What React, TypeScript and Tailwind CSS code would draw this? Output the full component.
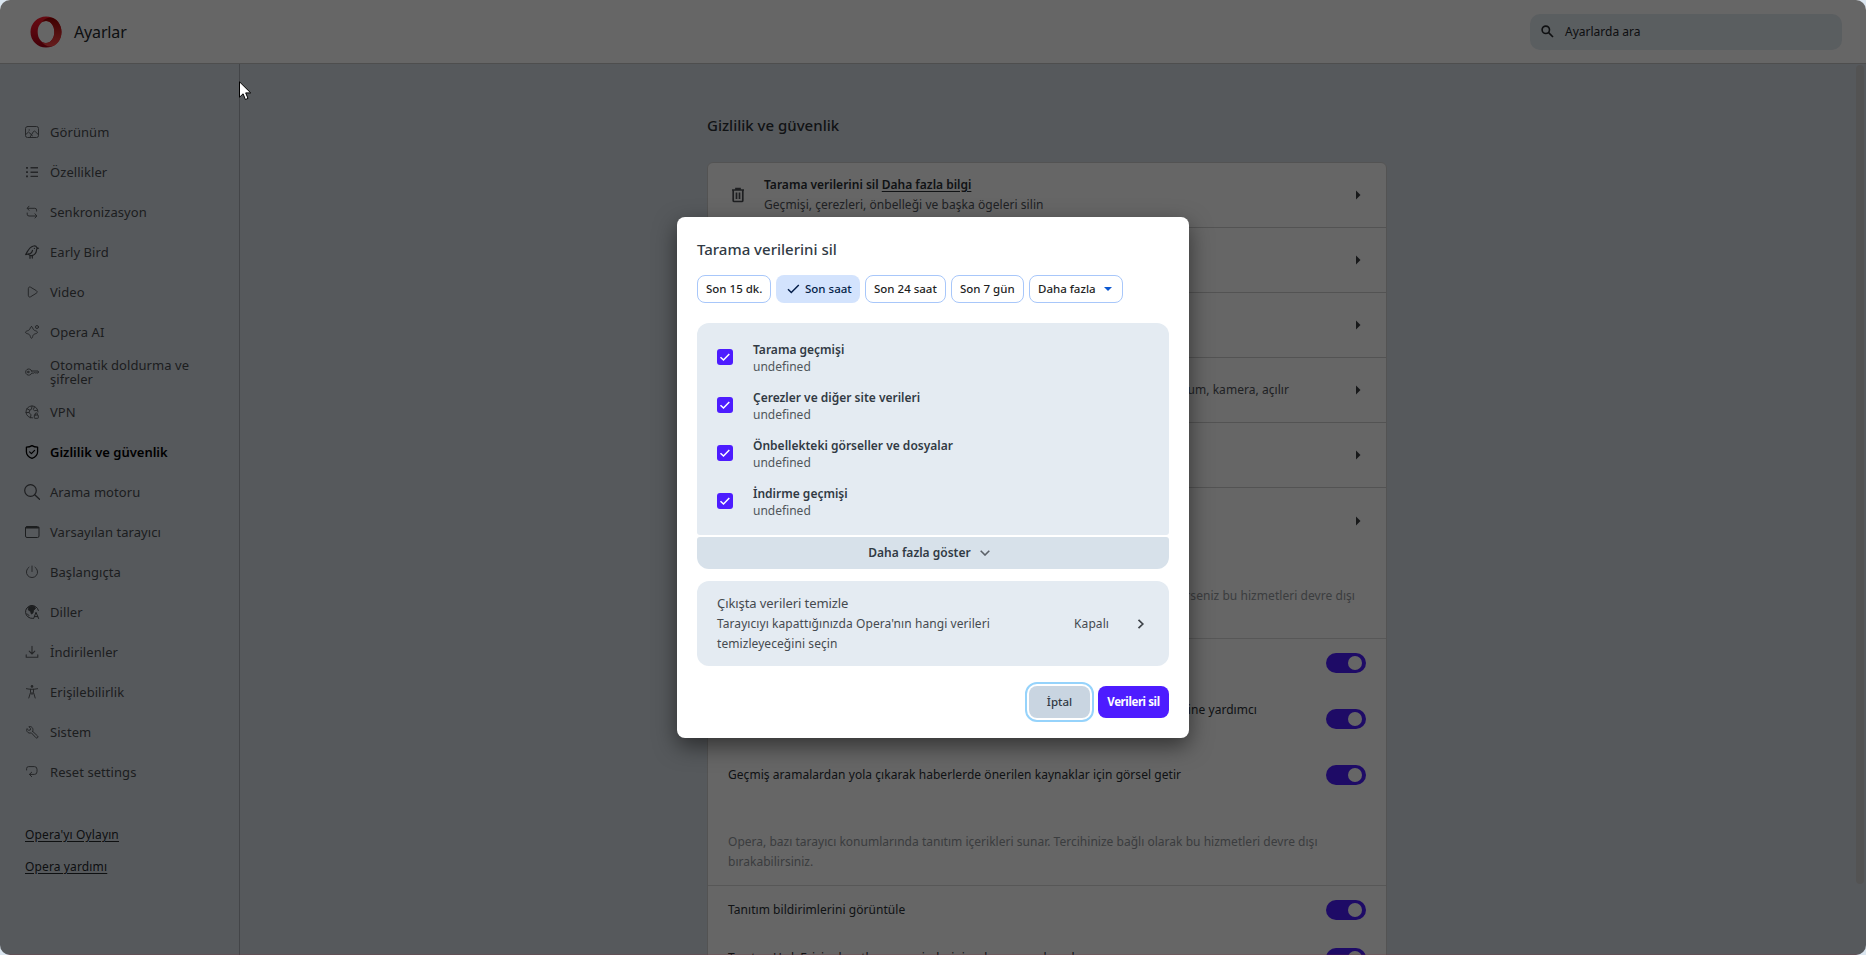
import type { ReactNode } from "react";

type IconProps = { children: ReactNode; size?: number; className?: string };

function Icon({ children, size = 16, className = "" }: IconProps) {
  return (
    <svg
      width={size}
      height={size}
      viewBox="0 0 16 16"
      fill="none"
      stroke="currentColor"
      strokeWidth="1"
      strokeLinecap="round"
      strokeLinejoin="round"
      className={`shrink-0 ${className}`}
    >
      {children}
    </svg>
  );
}

type NavItem = { label: string; icon: ReactNode; active?: boolean; dark?: boolean };

const navItems: NavItem[] = [
  {
    label: "Görünüm",
    icon: (
      <>
        <rect x="1.5" y="2.5" width="13" height="11" rx="2" />
        <circle cx="5.2" cy="6" r=".7" fill="currentColor" stroke="none" />
        <path d="M1.8 10.5 4.5 8l2.4 2.2M6 13.2 9.2 8c.6-1 1.2-1.3 2-.5l3 3M6.9 10.2l1.6 1.6" />
      </>
    ),
  },
  {
    label: "Özellikler",
    icon: (
      <>
        <path d="M6.5 3.8h7.5M6.5 8.2h7.5M6.5 12.4h7.5" strokeWidth="1.4" strokeLinecap="butt" />
        <path d="M2 3.8h2M2 8.2h2M2 12.4h2" strokeWidth="1.8" strokeLinecap="butt" />
      </>
    ),
  },
  {
    label: "Senkronizasyon",
    icon: <path d="M5 2.2 3.2 4.3 5 6.3M3.4 4.3h7.4a1.8 1.8 0 0 1 1.8 1.8v1M11 14l1.8-2L11 9.8M12.6 12H5a1.8 1.8 0 0 1-1.8-1.8V9" />,
  },
  {
    label: "Early Bird",
    dark: true,
    icon: (
      <>
        <path
          d="M14.5 4.2 12.8 3.6C12.3 2.2 10.8 1.6 9.5 2 7 2.7 4.8 5 3.2 7.9L1.7 10.6l2.6-.6c1 1.5 2.6 2.1 4.4 1.4 2.2-.9 3.6-2.7 3.8-5.2l.3-1.4z"
          strokeWidth="1.2"
        />
        <path d="M4.3 10c1.8 0 3.8-1.6 4.2-3.6M6 12v2.3M8.3 11.8v2.3M10.4 4.3v.1" strokeWidth="1.2" />
      </>
    ),
  },
  {
    label: "Video",
    icon: <path d="M4.3 4.4c0-1.1 1.1-1.8 2.1-1.3l6 3.6c1 .6 1 1.9 0 2.5l-6 3.7c-1 .5-2.1-.1-2.1-1.3z" />,
  },
  {
    label: "Opera AI",
    icon: (
      <>
        <path d="M7.5 2.6c.7 0 1 .6 1.2 1.3.4 1.6 1 2.2 2.6 2.8.9.3 2.2.8 2.2 1.6s-1.3 1.2-2.2 1.5c-1.6.5-2.2 1-2.6 2.6-.2.9-.6 1.9-1.2 1.9s-1-1-1.2-1.9c-.4-1.6-1-2.1-2.6-2.6-.9-.3-2.2-.7-2.2-1.5s1.3-1.3 2.2-1.6c1.6-.6 2.2-1.2 2.6-2.8.2-.7.5-1.3 1.2-1.3z" />
        <circle cx="13" cy="3" r="1.5" />
      </>
    ),
  },
  {
    label: "Otomatik doldurma ve şifreler",
    icon: (
      <>
        <path d="M7.7 7H14l.6 1-.6 1h-1.2l-.7-.5-.8.5-.8-.4-.7.5H7.7a3.100 3.100 0 1 1 0-2.100z" />
        <circle cx="4.2" cy="8" r=".8" />
      </>
    ),
  },
  {
    label: "VPN",
    icon: (
      <>
        <path d="M8.5 13.900A6 6 0 1 1 14 8M3 4.800l2.800 1.400 1.700-1L8 2.100M5.800 6.200 5 8.500l2 2.300-.6 3M10.400 3l-1 2.600 1 1.200 3-.6M2 8.500h3" />
        <rect x="10.3" y="11" width="4" height="3.3" rx=".5" />
        <path d="M11.2 11v-1a1.100 1.100 0 0 1 2.200 0v1" />
      </>
    ),
  },
  {
    label: "Gizlilik ve güvenlik",
    active: true,
    icon: (
      <>
        <path d="M8 1.600c1.600 1.100 3.500 1.500 5.600 1.500v4.700c0 3.200-2.200 5.300-5.600 6.600-3.400-1.300-5.600-3.400-5.600-6.600V3.100c2.100 0 4-.4 5.600-1.500z" strokeWidth="1.3" />
        <path d="m5.600 7.900 1.800 1.700 3.200-3.200" strokeWidth="1.2" />
      </>
    ),
  },
  {
    label: "Arama motoru",
    dark: true,
    icon: (
      <>
        <circle cx="6.5" cy="6.5" r="5.8" strokeWidth="1.2" />
        <path d="m10.700 10.700 4.800 4.600" strokeWidth="1.3" />
      </>
    ),
  },
  {
    label: "Varsayılan tarayıcı",
    dark: true,
    icon: (
      <>
        <rect x="1.5" y="2.5" width="13.5" height="11" rx="1.5" />
        <path d="M2 3.700h12.500" strokeWidth="1.6" />
      </>
    ),
  },
  {
    label: "Başlangıçta",
    icon: <path d="M8 2v5.500M5 3.200a5.600 5.600 0 1 0 6 0" />,
  },
  {
    label: "Diller",
    dark: true,
    icon: (
      <>
        <path d="M8.500 14.400A6.500 6.500 0 1 1 14.400 6.500" />
        <path d="M4.500 3.200 7 2l3.500.5 1 2-2 1.700-.6 2.800-1.500 1-.8-2.700-1.800-1z" fill="currentColor" />
        <path d="m3.200 9.800 1.800 1.800M9.600 14.500 12 8.300l2.600 6.200M10.400 12.600h3.300" />
      </>
    ),
  },
  {
    label: "İndirilenler",
    icon: <path d="M8 2.300v7.500M5.200 7.200 8 10l2.800-2.800M2.200 10.800v2.400h11.600v-2.400" strokeWidth="1.1" />,
  },
  {
    label: "Erişilebilirlik",
    icon: (
      <>
        <circle cx="8" cy="2.4" r="1.3" fill="currentColor" stroke="none" />
        <path d="M2.400 4.700c3.700.8 7.500.8 11.200 0M6.500 5.300v3.200l-1.700 5.500M9.500 5.300v3.200l1.700 5.500M6.700 9h2.600M8 9.300v1.200" />
      </>
    ),
  },
  {
    label: "Sistem",
    icon: <path d="M8.700 7.400 13.600 12a1.200 1.200 0 0 1-1.700 1.700L7.300 8.800c-1.500.6-3.200.3-4-1-.7-.9-.9-2.200-.4-3.200l1.800 1.700 1.600-.3.300-1.600L4.800 2.700c2.500-.9 5.200 1.500 3.900 4.700z" />,
  },
  {
    label: "Reset settings",
    icon: <path d="M2.600 6V4.600a2 2 0 0 1 2-2h5.800a2.600 2.600 0 0 1 2.600 2.600v2.600a2.600 2.600 0 0 1-2.600 2.600H5.500M7.700 8.200l-2.300 2.200 2.300 2.300" />,
  },
];

function OperaLogo() {
  return (
    <svg width="32" height="32" viewBox="0 0 32 32" className="shrink-0">
      <defs>
        <linearGradient id="ring" x1="0" y1="0" x2="0" y2="1">
          <stop offset="0" stopColor="#ff1b2d" />
          <stop offset=".35" stopColor="#e8152a" />
          <stop offset="1" stopColor="#a70014" />
        </linearGradient>
        <linearGradient id="side" x1="0" y1="0" x2="0" y2="1">
          <stop offset="0" stopColor="#9c0000" />
          <stop offset="1" stopColor="#ff4b4b" />
        </linearGradient>
      </defs>
      <path
        fillRule="evenodd"
        fill="url(#ring)"
        d="M16 .5a15.500 15.500 0 1 0 0 31 15.500 15.500 0 0 0 0-31zm0 4.500c4.700 0 8.300 4.700 8.300 11s-3.600 11-8.300 11-8.300-4.700-8.300-11 3.600-11 8.300-11z"
      />
      <path
        fill="url(#side)"
        d="M10.800 7.300C12 5.800 14 5 16 5c4.700 0 8.300 4.700 8.300 11s-3.600 11-8.300 11c-2 0-4-.8-5.200-2.300 2.400 3.600 6 5.900 9.500 5.900 6 0 11.200-6.500 11.200-14.600S26.300 1.400 20.300 1.400c-3.500 0-7.100 2.300-9.500 5.900z"
      />
    </svg>
  );
}

function Toggle() {
  return (
    <span className="flex h-5 w-10 shrink-0 items-center justify-end rounded-full bg-[#4d1cff] pr-1">
      <span className="size-3.5 rounded-full bg-white" />
    </span>
  );
}

function RowArrow() {
  return (
    <svg width="5" height="10" viewBox="0 0 5 10" className="text-[#3c3f43]">
      <path d="M0 .5 4.500 5 0 9.500z" fill="currentColor" />
    </svg>
  );
}

function LinkRow({ children }: { children?: ReactNode }) {
  return (
    <div className="flex h-[65px] items-center border-b border-[#cfcfcf] pr-[25px] pl-5">
      <div className="flex flex-1 items-center">{children}</div>
      <RowArrow />
    </div>
  );
}

function Sidebar() {
  return (
    <aside className="w-[240px] shrink-0 border-r border-[#a9adb3] pt-12">
      <nav>
        {navItems.map((item) => (
          <a
            key={item.label}
            className={`flex h-10 items-center gap-[10px] pr-8 pl-6 text-[13px] leading-[14px] ${
              item.active ? "font-semibold text-black" : "tracking-[0.06px] text-[#484b4f]"
            }`}
          >
            <Icon className={item.active ? "text-black" : item.dark ? "text-[#484b4f]" : "text-[#5c6064]"}>{item.icon}</Icon>
            <span>{item.label}</span>
          </a>
        ))}
      </nav>
      <div className="mt-[27px] flex flex-col items-start pl-[25px] text-[12px] leading-8 tracking-[0.13px] text-[#25282c] underline underline-offset-2">
        <a>Opera'yı Oylayın</a>
        <a>Opera yardımı</a>
      </div>
    </aside>
  );
}

function SettingsCard() {
  return (
    <div className="mt-[25px] h-[900px] rounded-md border border-[#d0d0d0] bg-white text-[12px] tracking-[0.05px] text-[#2b3035]">
      <LinkRow>
        <svg width="20" height="20" viewBox="0 0 20 20" fill="none" stroke="#4b4f54" strokeWidth="1.7">
          <path d="M4 5h12M8 4.600V3.500h4v1.100M5.200 5v10.500c0 .7.400 1 1 1h7.600c.6 0 1-.3 1-1V5M8.500 7.500v6.500M11.500 7.500v6.500" />
        </svg>
        <div className="ml-4 leading-5 whitespace-nowrap">
          <div className="font-semibold tracking-normal">
            Tarama verilerini sil <a className="underline underline-offset-2">Daha fazla bilgi</a>
          </div>
          <div className="text-[#50545a]">Geçmişi, çerezleri, önbelleği ve başka ögeleri silin</div>
        </div>
      </LinkRow>
      <LinkRow />
      <LinkRow />
      <LinkRow>
        <div className="w-[561px] text-right whitespace-nowrap text-[#50545a]">bilgileri kullanabileceğini kontrol eder (konum, kamera, açılır</div>
      </LinkRow>
      <LinkRow />
      <div className="h-[151px] border-b border-[#d9d9d9]">
        <div className="flex h-[65px] items-center justify-end pr-[25px]">
          <RowArrow />
        </div>
        <p className="pt-[33px] pr-[31px] text-right leading-5 text-[#94989d]">İsterseniz bu hizmetleri devre dışı</p>
      </div>
      <div className="flex h-12 items-center justify-end px-5">
        <Toggle />
      </div>
      <div className="flex h-16 items-center justify-end px-5">
        <span className="mr-[69px] pb-[19px] leading-5">gelişmesine yardımcı</span>
        <Toggle />
      </div>
      <div className="flex h-12 items-center justify-between px-5">
        <span>Geçmiş aramalardan yola çıkarak haberlerde önerilen kaynaklar için görsel getir</span>
        <Toggle />
      </div>
      <div className="h-[87px] border-b border-[#d9d9d9] px-5 pt-[33px]">
        <p className="w-[620px] leading-5 tracking-[0.02px] text-[#94989d]">
          Opera, bazı tarayıcı konumlarında tanıtım içerikleri sunar. Tercihinize bağlı olarak bu hizmetleri devre dışı bırakabilirsiniz.
        </p>
      </div>
      <div className="flex h-12 items-center justify-between px-5">
        <span>Tanıtım bildirimlerini görüntüle</span>
        <Toggle />
      </div>
      <div className="flex h-12 items-center justify-between px-5">
        <span>Tanıtım Hızlı Erişim kayıtlarını, yer imlerini ve kampanyaları al</span>
        <Toggle />
      </div>
    </div>
  );
}

const dataTypes = ["Tarama geçmişi", "Çerezler ve diğer site verileri", "Önbellekteki görseller ve dosyalar", "İndirme geçmişi"];

const chipBase = "flex h-7 items-center rounded-lg text-[11.5px] font-medium whitespace-nowrap";
const chipOutline = `${chipBase} border border-[#a8c7fa] pl-2 text-[#1f1f1f]`;

function ClearDataDialog() {
  return (
    <div
      role="dialog"
      className="flex h-[521px] w-[512px] flex-col rounded-lg bg-white px-5 shadow-[0_8px_22px_rgba(0,0,0,0.5)]"
    >
      <h2 className="mt-5 text-[15px] leading-6 font-medium text-[#313a44]">Tarama verilerini sil</h2>

      <div className="mt-[14px] flex gap-[5px]">
        <span className={`${chipOutline} w-[74px]`}>Son 15 dk.</span>
        <span className={`${chipBase} w-[84px] gap-[5px] bg-[#d3e3fd] pl-[11px] text-[#041e49]`}>
          <svg width="13" height="10" viewBox="0 0 13 10" fill="none" stroke="currentColor" strokeWidth="1.5">
            <path d="m1 5.300 3.300 3.200L11.800 1" />
          </svg>
          Son saat
        </span>
        <span className={`${chipOutline} w-[81px]`}>Son 24 saat</span>
        <span className={`${chipOutline} w-[73px]`}>Son 7 gün</span>
        <span className={`${chipOutline} w-[94px] gap-2`}>
          Daha fazla
          <svg width="8" height="4" viewBox="0 0 8 4">
            <path d="M0 0h8L4 4z" fill="#0b57d0" />
          </svg>
        </span>
      </div>

      <div className="mt-5 flex h-[212px] flex-col rounded-t-xl rounded-b-[3px] bg-[#e4ebf2] pt-[10px] pl-5">
        {dataTypes.map((label) => (
          <label key={label} className="flex h-12 items-center gap-5">
            <span className="flex size-4 items-center justify-center rounded-[3px] bg-[#4d1cff]">
              <svg width="12" height="12" viewBox="0 0 12 12" fill="none" stroke="#fff" strokeWidth="1.5">
                <path d="m1.500 6.200 3 2.800L10.300 3" />
              </svg>
            </span>
            <span className="pt-[2px] text-[12px] leading-[17px]">
              <span className="block font-semibold text-[#313a44]">{label}</span>
              <span className="block text-[#50565b]">undefined</span>
            </span>
          </label>
        ))}
      </div>

      <button className="mt-[2px] flex h-8 items-center justify-center gap-[9px] rounded-t-[3px] rounded-b-xl bg-[#d7e1ea] pr-[8px] text-[12px] font-semibold text-[#313a44]">
        Daha fazla göster
        <svg width="10" height="6" viewBox="0 0 10 6" fill="none" stroke="#5b6168" strokeWidth="1.6">
          <path d="m.7.700 4.300 4.300L9.300.7" />
        </svg>
      </button>

      <div className="mt-3 flex h-[85px] items-center rounded-xl bg-[#e4ebf2] pt-[2px] pr-6 pl-5 text-[12px] leading-[20.6px] tracking-[0.07px] text-[#454a4f]">
        <div className="w-[300px]">
          <div className="text-[13px] tracking-[-0.08px]">Çıkışta verileri temizle</div>
          <div>Tarayıcıyı kapattığınızda Opera'nın hangi verileri temizleyeceğini seçin</div>
        </div>
        <span className="ml-auto">Kapalı</span>
        <svg width="8" height="10" viewBox="0 0 8 10" fill="none" stroke="#3f444a" strokeWidth="1.7" className="ml-[28px]">
          <path d="M1.500.8 5.800 5 1.500 9.200" />
        </svg>
      </div>

      <div className="mt-5 flex justify-end gap-2 text-[11.5px]">
        <button className="h-8 w-[61px] rounded-lg bg-[#c9d5e1] font-medium text-[#313a44] outline-2 outline-offset-2 outline-[#96d3fb]">
          İptal
        </button>
        <button className="h-8 w-[71px] rounded-lg bg-[#4d1cff] font-bold tracking-[-0.4px] text-white">Verileri sil</button>
      </div>
    </div>
  );
}

export default function App() {
  return (
    <div className="h-[955px] w-[1866px] overflow-hidden bg-[#dbe6f0] font-['Noto_Sans',sans-serif]">
      <div className="relative flex h-full flex-col overflow-hidden rounded-[10px] bg-[#d8dfe7]">
        <header className="flex h-16 shrink-0 items-center border-b border-[#c4c4c4] bg-white pr-6 pl-[30px]">
          <OperaLogo />
          <h1 className="ml-3 pt-px text-[16px] tracking-[-0.15px] text-[#25282c]">Ayarlar</h1>
          <div className="ml-auto flex h-9 w-[312px] items-center gap-[11px] rounded-[10px] bg-[#e2eaf0] pl-[11px] text-[12px] text-[#25282c]">
            <svg width="13" height="13" viewBox="0 0 13 13" fill="none" stroke="currentColor" strokeWidth="1.6">
              <circle cx="4.8" cy="4.8" r="3.7" />
              <path d="m7.600 7.600 4.400 4.400" />
            </svg>
            Ayarlarda ara
          </div>
        </header>

        <div className="flex min-h-0 flex-1">
          <Sidebar />
          <main className="flex flex-1 justify-center overflow-hidden pr-[2px]">
            <section className="w-[680px] pt-[49px]">
              <h2 className="text-[15px] leading-6 font-medium text-[#2b3035]">Gizlilik ve güvenlik</h2>
              <SettingsCard />
            </section>
          </main>
          <div className="mt-px mr-[2px] h-[819px] w-2 rounded-full bg-[#cfcfcf]" />
        </div>

        <div className="absolute inset-0 flex items-center justify-center border-b border-[#8a2b41]/20 bg-black/60">
          <ClearDataDialog />
        </div>

        {/* Mouse pointer */}
        <svg width="13" height="20" viewBox="0 0 13 20" className="absolute top-[81px] left-[239px]">
          <path d="M.5.800v15.400l3.600-3.400 2.300 5.700 2.600-1.100-2.300-5.500h5z" fill="#fff" stroke="#000" />
        </svg>
      </div>
    </div>
  );
}
